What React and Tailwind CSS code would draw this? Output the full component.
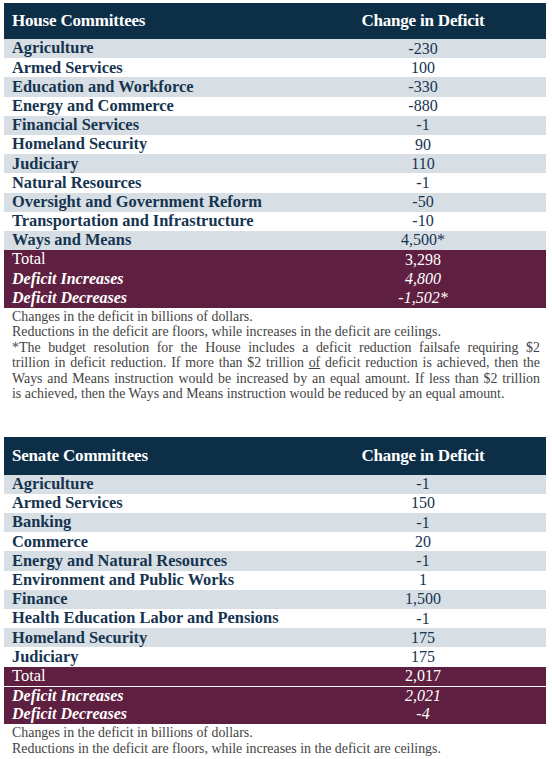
const house = [
  ["Agriculture", "-230"],
  ["Armed Services", "100"],
  ["Education and Workforce", "-330"],
  ["Energy and Commerce", "-880"],
  ["Financial Services", "-1"],
  ["Homeland Security", "90"],
  ["Judiciary", "110"],
  ["Natural Resources", "-1"],
  ["Oversight and Government Reform", "-50"],
  ["Transportation and Infrastructure", "-10"],
  ["Ways and Means", "4,500*"],
];

const senate = [
  ["Agriculture", "-1"],
  ["Armed Services", "150"],
  ["Banking", "-1"],
  ["Commerce", "20"],
  ["Energy and Natural Resources", "-1"],
  ["Environment and Public Works", "1"],
  ["Finance", "1,500"],
  ["Health Education Labor and Pensions", "-1"],
  ["Homeland Security", "175"],
  ["Judiciary", "175"],
];

function Header({ title, tall }) {
  return (
    <div className={`flex items-center bg-[#0c2f47] text-white ${tall ? "h-[38px]" : "h-[36px]"}`}>
      <div className="w-[296px] pl-[8px] text-[17px] font-bold tracking-[-0.2px]">{title}</div>
      <div className="flex-1 text-center text-[17px] font-bold tracking-[-0.2px]">Change in Deficit</div>
    </div>
  );
}

function Row({ label, value, i }) {
  return (
    <div className={`flex h-[19.2px] items-center text-[#163450] ${i % 2 === 0 ? "bg-[#d7dfe5]" : "bg-white"}`}>
      <div className="w-[296px] whitespace-nowrap pl-[8px] text-[16.4px] font-bold leading-none">{label}</div>
      <div className="flex-1 text-center text-[16px] leading-none">{value}</div>
    </div>
  );
}

function Summary({ label, value, italic, line }) {
  return (
    <div className={`flex h-[19.2px] items-center bg-[#5e1f40] text-white ${line ? "border-t border-white" : ""}`}>
      <div className={`w-[296px] pl-[8px] leading-none ${italic ? "text-[16px] font-bold italic" : "text-[16.5px]"}`}>{label}</div>
      <div className={`flex-1 text-center text-[16px] leading-none ${italic ? "italic" : ""}`}>{value}</div>
    </div>
  );
}

function J({ children, last }) {
  return <div className={`whitespace-nowrap ${last ? "" : "text-justify [text-align-last:justify] whitespace-normal"}`}>{children}</div>;
}

export default function App() {
  return (
    <div className="h-[759px] w-[552px] bg-white px-[4px] pt-[3px]" style={{ fontFamily: '"Liberation Serif", serif' }}>
      <div className="w-[542px]">
        <Header title="House Committees" />
        {house.map((r, i) => (
          <Row key={r[0]} label={r[0]} value={r[1]} i={i} />
        ))}
        <Summary label="Total" value="3,298" />
        <Summary label="Deficit Increases" value="4,800" italic />
        <Summary label="Deficit Decreases" value="-1,502*" italic />
        <div className="pl-[8px] pr-[6px] pt-[1px] text-[13.9px] leading-[15.5px] text-[#444]">
          <div className="whitespace-nowrap">Changes in the deficit in billions of dollars.</div>
          <div className="whitespace-nowrap">Reductions in the deficit are floors, while increases in the deficit are ceilings.</div>
          <J>*The budget resolution for the House includes a deficit reduction failsafe requiring $2</J>
          <J>
            trillion in deficit reduction. If more than $2 trillion <span className="underline">of</span> deficit reduction is achieved, then the
          </J>
          <J>Ways and Means instruction would be increased by an equal amount. If less than $2 trillion</J>
          <J last>is achieved, then the Ways and Means instruction would be reduced by an equal amount.</J>
        </div>
      </div>
      <div className="mt-[35px] w-[542px]">
        <Header title="Senate Committees" tall />
        {senate.map((r, i) => (
          <Row key={r[0]} label={r[0]} value={r[1]} i={i} />
        ))}
        <Summary label="Total" value="2,017" />
        <Summary label="Deficit Increases" value="2,021" italic line />
        <Summary label="Deficit Decreases" value="-4" italic />
        <div className="pl-[8px] pt-[1px] text-[13.9px] leading-[15.5px] text-[#444]">
          <div className="whitespace-nowrap">Changes in the deficit in billions of dollars.</div>
          <div className="whitespace-nowrap">Reductions in the deficit are floors, while increases in the deficit are ceilings.</div>
        </div>
      </div>
    </div>
  );
}
